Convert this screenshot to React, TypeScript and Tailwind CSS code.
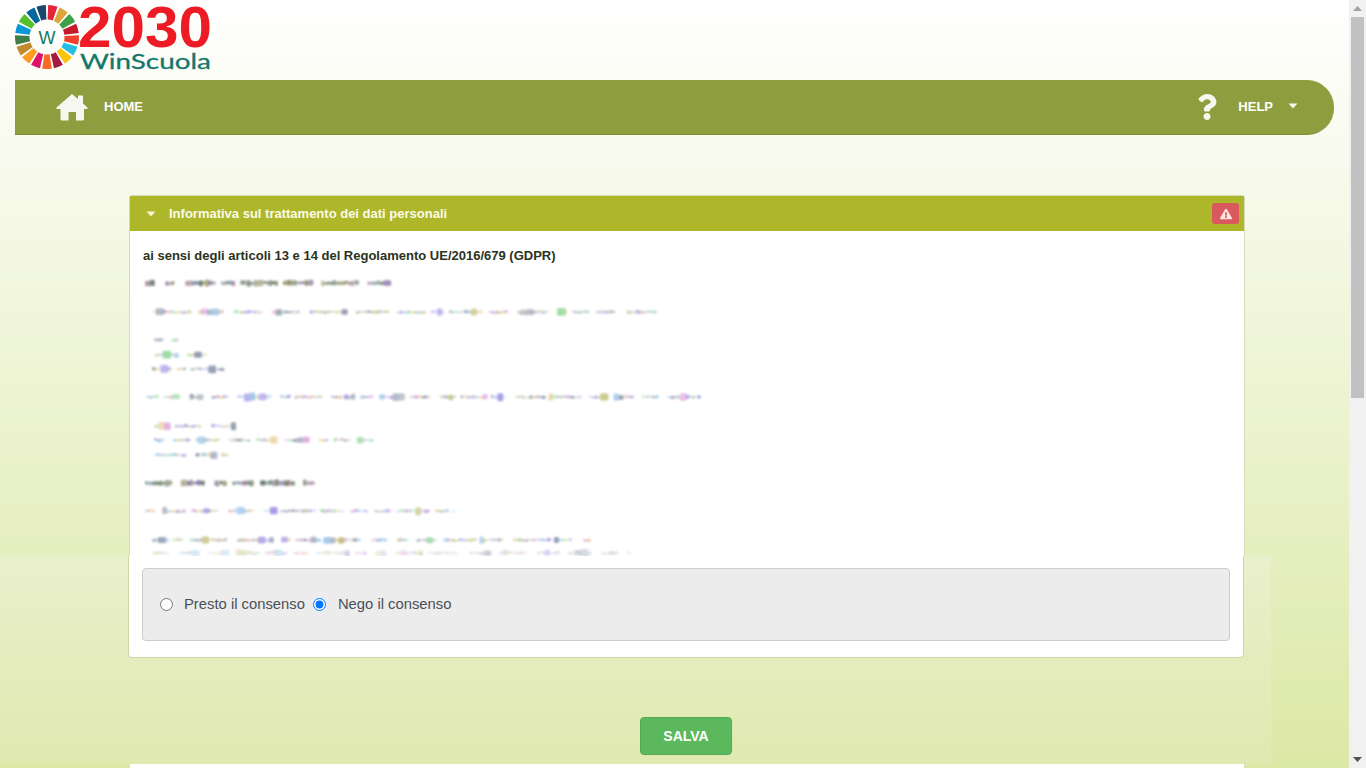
import { FaQuestion, FaExclamationTriangle } from "react-icons/fa";

const SDG = ["#e5243b","#dda63a","#3f9f45","#c5192d","#f2402c","#26bde2","#fcc30b","#a21942","#fd6925","#dd1367","#fd9d24","#bf8b2e","#3f7e44","#0a97d9","#56c02b","#00689d","#19486a"];

function Logo() {
  const cx = 32, cy = 33, R = 32, r = 17.5, n = 17;
  const pt = (rad: number, a: number) => `${(cx + rad * Math.sin(a)).toFixed(2)} ${(cy - rad * Math.cos(a)).toFixed(2)}`;
  return (
    <svg width="200" height="72" viewBox="0 0 200 72" className="block">
      {SDG.map((c, i) => {
        const step = (Math.PI * 2) / n;
        const a0 = i * step + 0.035;
        const a1 = (i + 1) * step - 0.035;
        return <path key={c + i} fill={c} d={`M${pt(R, a0)} A${R} ${R} 0 0 1 ${pt(R, a1)} L${pt(r, a1)} A${r} ${r} 0 0 0 ${pt(r, a0)} Z`} />;
      })}
      <text x="32" y="40" textAnchor="middle" fontSize="18" fontFamily="'Liberation Sans', sans-serif" fill="#15776b">W</text>
      <text x="63" y="43" fontSize="58" fontWeight="700" fontFamily="'Liberation Sans', sans-serif" fill="#ed1c24" textLength="134" lengthAdjust="spacingAndGlyphs">2030</text>
      <text x="65" y="65" fontSize="22" fontFamily="Lato, sans-serif" fill="#15776b" stroke="#15776b" strokeWidth="0.3" textLength="131" lengthAdjust="spacingAndGlyphs">WinScuola</text>
    </svg>
  );
}

const ROWS: [number, number, number, number][] = [
  [145, 283, 385, 1],
  [152, 312, 656, 0],
  [154, 340, 181, 0],
  [155, 355, 204, 0],
  [152, 369, 225, 0],
  [146, 397, 700, 0],
  [154, 426, 233, 0],
  [154, 440, 372, 0],
  [154, 455, 226, 0],
  [145, 483, 312, 1],
  [145, 511, 454, 0],
  [152, 540, 590, 0],
  [152, 553, 628, 0],
];
const PALETTE = ["#a89ae6", "#9edca6", "#e8c890", "#dca0dc", "#9cc6ea", "#aeb2bc", "#c2c27e", "#8e98ae"];
const DARK = ["#76876f", "#8a76a6", "#94946e", "#7690a6", "#a6869a", "#667766"];

function rng(seed: number) {
  let s = seed;
  return () => {
    s = (s * 16807) % 2147483647;
    return s / 2147483647;
  };
}

function Obscured() {
  const rand = rng(4242);
  const rects: { x: number; y: number; w: number; h: number; c: string; o: number }[] = [];
  ROWS.forEach(([x0, y, x1, strong]) => {
    let x = x0;
    const faint = y === 553 ? 0.5 : 1;
    while (x < x1) {
      const wordEnd = Math.min(x1, x + 6 + rand() * 30);
      while (x < wordEnd) {
        const big = rand() > 0.88;
        const w = big ? 4 + rand() * 5 : 2 + rand() * 3;
        const h = strong ? 3 + rand() * 4 : big ? 5 + rand() * 3 : 1.5 + rand() * 2;
        const pal = strong ? DARK : PALETTE;
        rects.push({ x: x - 130, y: y - 264 - h / 2 + (rand() - 0.5), w, h, c: pal[Math.floor(rand() * pal.length)], o: (0.65 + rand() * 0.35) * faint });
        x += w * 0.8 + rand() * 0.8;
      }
      x += 3 + rand() * 8;
    }
  });
  return (
    <svg width="600" height="296" viewBox="0 0 600 296" className="block blur-[0.8px]">
      {rects.map((r, i) => (
        <rect key={i} x={r.x} y={r.y} width={r.w} height={r.h} rx="1.5" fill={r.c} opacity={r.o} />
      ))}
    </svg>
  );
}

function Caret({ className }: { className: string }) {
  return (
    <svg width="10" height="6" viewBox="0 0 10 6" className={className}>
      <path d="M0.5 0.5H9.5L5 5.5Z" fill="currentColor" />
    </svg>
  );
}

function HomeIcon() {
  return (
    <svg width="32" height="28" viewBox="0 0 32 28" className="ml-[41px] shrink-0">
      <path
        d="M16 1 L22 6 V2.5 H27 V10.5 L31.5 14.5 C32 15.2 31.5 16 30.8 16 H28 V26 Q28 27.5 26.5 27.5 H20 V19 H12.5 V27.5 H6 Q4.5 27.5 4.5 26 V16 H1.2 C0.5 16 0 15.2 0.5 14.5 Z"
        fill="#f6f7ee"
      />
    </svg>
  );
}

export default function App() {
  return (
    <div className="flex h-[768px] w-[1366px] overflow-hidden font-['Liberation_Sans',Arial,sans-serif]">
      <main className="relative h-[768px] w-[1349px] overflow-hidden bg-gradient-to-b from-white to-[#dce8a5]">
        {/* Logo */}
        <div className="h-[80px] pl-[15px] pt-[4px]">
          <Logo />
        </div>

        {/* Nav */}
        <nav className="ml-[15px] flex h-[55px] w-[1319px] items-center rounded-r-[27px] border-b border-[#7f8e33] bg-[#8e9e3f] text-[13px] font-bold text-white">
          <HomeIcon />
          <span className="ml-[16px]">HOME</span>
          <FaQuestion className="ml-auto h-[26px] w-[26px] text-[#f6f7ee]" />
          <span className="ml-[18px]">HELP</span>
          <Caret className="mb-[2px] ml-[15px] mr-[36px] text-[#f6f7ee]" />
        </nav>

        {/* Main card */}
        <section className="ml-[129px] mt-[60px] w-[1116px] rounded-t-[3px] border border-[#d5dab8] bg-white">
          <header className="flex h-[35px] items-center bg-[#aeb62a] pl-[16px] pr-[5px] text-[13px] font-bold text-[#fbfbe8]">
            <Caret className="text-[#f4f5d8]" />
            <span className="ml-[13px]">Informativa sul trattamento dei dati personali</span>
            <span className="ml-auto flex h-[21px] w-[27px] items-center justify-center rounded-[3px] bg-[#d9595f]">
              <FaExclamationTriangle className="h-[12px] w-[12px] text-[#fbe3e3]" />
            </span>
          </header>
          <div className="h-[600px]">
            <p className="pl-[13px] pt-[17px] text-[13px] font-bold leading-[16px] text-[#2a3320]">
              ai sensi degli articoli 13 e 14 del Regolamento UE/2016/679 (GDPR)
            </p>
            <Obscured />
          </div>
        </section>

        {/* Sticky consent overlay */}
        <div className="absolute left-0 top-[556px] h-[208px] w-[1271px] bg-gradient-to-b from-[#e9f0cc] to-[#e0e9b0]">
          <div className="ml-[128px] h-[102px] w-[1116px] rounded-b-[4px] border-b border-l border-r border-[#d0d6a8] bg-white px-[13px] pt-[12px]">
            <div className="flex h-[73px] items-center rounded-[4px] border border-[#cccccc] bg-[#ececec] pl-[17px] text-[14.8px] text-[#495057]">
              <input type="radio" name="consenso" className="m-0 h-[13px] w-[13px]" />
              <label className="ml-[11px]">Presto il consenso</label>
              <input type="radio" name="consenso" defaultChecked className="m-0 ml-[8px] h-[13px] w-[13px]" />
              <label className="ml-[12px]">Nego il consenso</label>
            </div>
          </div>
          <div className="ml-[128px] flex w-[1116px] justify-center pt-[59px]">
            <button className="h-[38px] w-[92px] rounded-[4px] border border-[#52ab56] bg-[#5cb85c] text-[14px] font-bold text-white">SALVA</button>
          </div>
        </div>
      </main>

      {/* Scrollbar */}
      <aside className="flex h-[768px] w-[17px] flex-col items-center bg-[#f1f1f1]">
        <div className="flex h-[17px] items-center justify-center">
          <svg width="9" height="5" viewBox="0 0 9 5"><path d="M4.5 0L9 5H0Z" fill="#a3a3a3" /></svg>
        </div>
        <div className="h-[381px] w-[13px] bg-[#c1c1c1]" />
        <div className="mt-auto flex h-[17px] items-center justify-center">
          <svg width="9" height="5" viewBox="0 0 9 5"><path d="M0 0H9L4.5 5Z" fill="#505050" /></svg>
        </div>
      </aside>
    </div>
  );
}
